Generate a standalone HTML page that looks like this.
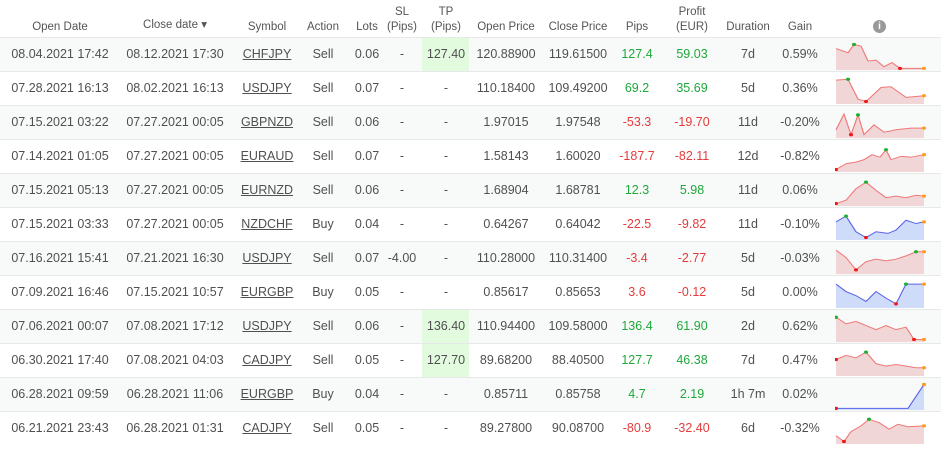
<!DOCTYPE html>
<html><head><meta charset="utf-8"><style>
body{margin:0;width:941px;height:449px;overflow:hidden;background:#fff;font-family:"Liberation Sans",Arial,sans-serif;color:#505050;font-size:12.5px}
.r{position:absolute;left:0;width:941px;height:34px;border-top:1px solid #e6e9e8;box-sizing:border-box}
.o{background:#f7faf8}
.c{position:absolute;width:110px;text-align:center;line-height:33px;top:0}
.h{position:absolute;width:110px;text-align:center;font-size:11.5px;color:#555;line-height:15px}
.u{text-decoration:underline}
.g{color:#1fa83a}.d{color:#e53b3b}
.tp{position:absolute;left:422px;width:47px;top:0;height:33px;background:#e2fbdf}
svg{position:absolute;left:835px;top:4px}
</style></head><body>
<div class="h" style="left:5px;top:20px">Open Date</div>
<div class="h" style="left:120px;top:18px">Close date ▾</div>
<div class="h" style="left:212px;top:20px">Symbol</div>
<div class="h" style="left:268px;top:20px">Action</div>
<div class="h" style="left:312px;top:20px">Lots</div>
<div class="h" style="left:347px;top:5px">SL<br>(Pips)</div>
<div class="h" style="left:391px;top:5px">TP<br>(Pips)</div>
<div class="h" style="left:451px;top:20px">Open Price</div>
<div class="h" style="left:523px;top:20px">Close Price</div>
<div class="h" style="left:582px;top:20px">Pips</div>
<div class="h" style="left:637px;top:5px">Profit<br>(EUR)</div>
<div class="h" style="left:693px;top:20px">Duration</div>
<div class="h" style="left:745px;top:20px">Gain</div>
<div style="position:absolute;left:873px;top:20px;width:13px;height:13px;border-radius:50%;background:#999;color:#fff;font-size:10px;font-weight:bold;text-align:center;line-height:13px">i</div>

<div id="rows"></div>
<script>
var d=[
["08.04.2021 17:42","08.12.2021 17:30","CHFJPY","Sell","0.06","-","127.40","120.88900","119.61500","127.4","59.03","7d","0.59%",1,"0,8 12,13 18,3 25,5 32,23 40,22 48,30 56,25 64,32 75,32 88,32",2,8,0],
["07.28.2021 16:13","08.02.2021 16:13","USDJPY","Sell","0.07","-","-","110.18400","109.49200","69.2","35.69","5d","0.36%",1,"0,5 12,4 22,28 30,31 45,14 55,13 70,26 88,24",1,3,0],
["07.15.2021 03:22","07.27.2021 00:05","GBPNZD","Sell","0.06","-","-","1.97015","1.97548","-53.3","-19.70","11d","-0.20%",0,"0,24 8,5 15,30 22,6 28,30 38,18 48,27 60,24 75,22 88,22",3,2,0],
["07.14.2021 01:05","07.27.2021 00:05","EURAUD","Sell","0.07","-","-","1.58143","1.60020","-187.7","-82.11","12d","-0.82%",0,"0,31 10,24 20,22 28,19 36,13 44,16 50,7 55,19 65,15 75,16 88,13",6,0,0],
["07.15.2021 05:13","07.27.2021 00:05","EURNZD","Sell","0.06","-","-","1.68904","1.68781","12.3","5.98","11d","0.06%",1,"0,31 10,27 20,13 30,5 40,15 50,24 60,22 70,24 80,21 88,22",3,0,0],
["07.15.2021 03:33","07.27.2021 00:05","NZDCHF","Buy","0.04","-","-","0.64267","0.64042","-22.5","-9.82","11d","-0.10%",0,"0,12 10,5 20,24 30,31 40,24 52,26 60,22 70,10 80,14 88,12",1,3,1],
["07.16.2021 15:41","07.21.2021 16:30","USDJPY","Sell","0.07","-4.00","-","110.28000","110.31400","-3.4","-2.77","5d","-0.03%",0,"0,5 10,14 20,29 30,19 40,16 50,18 60,16 70,12 80,7 88,7",8,2,0],
["07.09.2021 16:46","07.15.2021 10:57","EURGBP","Buy","0.05","-","-","0.85617","0.85653","3.6","-0.12","5d","0.00%",0,"0,5 10,14 20,19 30,26 40,14 50,22 60,29 70,5 80,5 88,5",7,6,1],
["07.06.2021 00:07","07.08.2021 17:12","USDJPY","Sell","0.06","-","136.40","110.94400","109.58000","136.4","61.90","2d","0.62%",1,"0,4 10,12 20,9 30,14 40,19 50,14 60,19 70,16 78,31 88,31",0,8,0],
["06.30.2021 17:40","07.08.2021 04:03","CADJPY","Sell","0.05","-","127.70","89.68200","88.40500","127.7","46.38","7d","0.47%",1,"0,14 10,9 20,12 30,5 40,19 50,22 60,20 70,22 80,24 88,24",3,0,0],
["06.28.2021 09:59","06.28.2021 11:06","EURGBP","Buy","0.04","-","-","0.85711","0.85758","4.7","2.19","1h 7m","0.02%",1,"0,32 45,32 72,32 88,3",3,0,1],
["06.21.2021 23:43","06.28.2021 01:31","CADJPY","Sell","0.05","-","-","89.27800","90.08700","-80.9","-32.40","6d","-0.32%",0,"0,24 8,31 15,19 25,12 33,4 43,8 53,16 62,10 72,13 88,12",4,1,0]];
var cx=[60,175,267,323,367,402,446,506,578,637,692,748,800],h="";
d.forEach(function(r,i){
 h+='<div class="r'+(i%2==0?' o':'')+'" style="top:'+(37+34*i)+'px">';
 if(r[6]!="-")h+='<div class="tp"></div>';
 for(var k=0;k<13;k++){var cl=k==2?"u":(k==9||k==10)?(r[13]?"g":"d"):"";
  h+='<div class="c '+cl+'" style="left:'+(cx[k]-55)+'px">'+r[k]+'</div>';}
 var p=r[14].split(" ").map(function(s){return s.split(",").map(Number)});
 var b=r[17],lc=b?"#5a63e8":"#f07878",fc=b?"#cfdcf9":"#f1d6d8";
 var g=p[r[15]],rd=p[r[16]],e=p[p.length-1];
 h+='<svg width="92" height="28" viewBox="-1 0 92 34" preserveAspectRatio="none"><polygon points="'+r[14]+' 88,34 0,34" fill="'+fc+'"/><polyline points="'+r[14]+'" fill="none" stroke="'+lc+'" stroke-width="1.2"/>'+
 '<circle cx="'+g[0]+'" cy="'+g[1]+'" r="2" fill="#1cb02e"/><circle cx="'+rd[0]+'" cy="'+rd[1]+'" r="2" fill="#f01818"/><circle cx="'+e[0]+'" cy="'+e[1]+'" r="2" fill="#ff9a1e"/></svg></div>';
});
document.getElementById("rows").innerHTML=h;
</script>
</body></html>
